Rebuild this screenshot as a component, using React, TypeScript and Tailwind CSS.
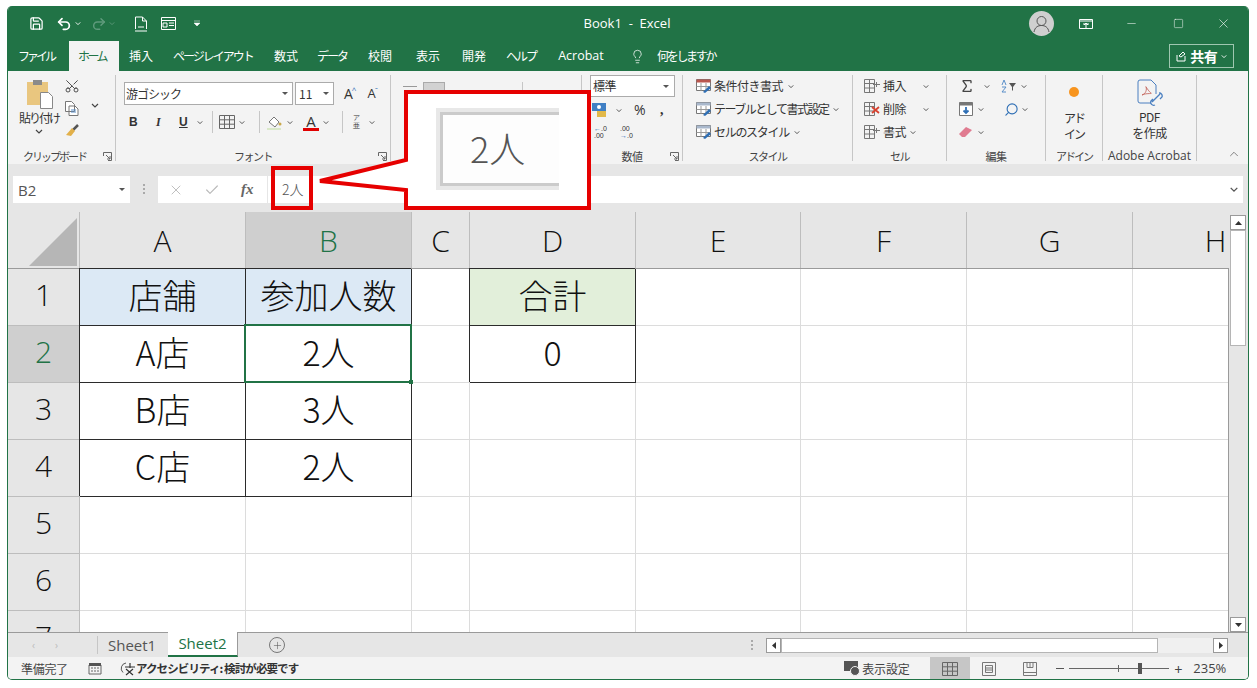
import React from "react";
import { Scissors, Undo2, Redo2, Save, Lightbulb, X, Check, Minus, Square, Search, Plus, Sigma, ChevronUp } from "lucide-react";

const Chev = ({ c = "#444", cls = "" }: { c?: string; cls?: string }) => (
  <svg width="8" height="5" viewBox="0 0 8 5" className={cls}><path d="M1 1l3 3 3-3" fill="none" stroke={c} strokeWidth="1.2" /></svg>
);
const Launcher = () => (
  <svg width="9" height="9" viewBox="0 0 9 9"><path d="M.5 4V.5H8.5V8.5H5M3 3l4 4M7 4v3H4" fill="none" stroke="#666" strokeWidth="1" /></svg>
);
const Sep = ({ cls = "" }: { cls?: string }) => <div className={"w-px bg-[#c6c6c6] " + cls} />;

const GridIcon = ({ c = "#666" }: { c?: string }) => (
  <svg width="16" height="14" viewBox="0 0 16 14"><path d="M.5.5h15v13H.5zM.5 4.8h15M.5 9.2h15M5.5.5v13M10.5.5v13" fill="none" stroke={c} /></svg>
);
const TableIcon = ({ red = false }: { red?: boolean }) => (
  <svg width="18" height="16" viewBox="0 0 18 16">
    <path d="M1.5 1.5h10v13h-10zM1.5 5.5h10M1.5 10h10M6.5 1.5v13" fill="none" stroke="#777" />
    {red ? <path d="M9 6l7 6M16 6l-7 6" stroke="#d8412f" strokeWidth="1.8" /> : <path d="M10 6.5h7M13.5 4v5" stroke="#777" />}
  </svg>
);
const StyleIcon = ({ kind }: { kind: number }) => (
  <svg width="18" height="16" viewBox="0 0 18 16">
    <path d="M1.5 1.5h14v11h-14z" fill="#fff" stroke="#777" />
    <path d="M1.5 1.5h14v3h-14z" fill={kind === 0 ? "#b9574f" : "#a9b8cc"} />
    <path d="M1.5 8.5h14M6 5v8M11 5v8" stroke="#999" />
    <path d="M8 14l6-6 2 2-6 5z" fill="#2f6fb5" />
  </svg>
);

const tabs: [string, string, string][] = [
  ["挿入", "w-[44px]", ""],
  ["ページレイアウト", "w-[100px]", "tracking-[-2px]"],
  ["数式", "w-[46px]", ""],
  ["データ", "w-[46px]", "tracking-[-2px]"],
  ["校閲", "w-[50px]", ""],
  ["表示", "w-[46px]", ""],
  ["開発", "w-[46px]", ""],
  ["ヘルプ", "w-[48px]", "tracking-[-2px]"],
  ["Acrobat", "w-[72px]", "font-['Open_Sans'] text-[12.5px]"],
];

const columns: [string, string, boolean][] = [
  ["A", "w-[166px]", false],
  ["B", "w-[166px]", true],
  ["C", "w-[58px]", false],
  ["D", "w-[166px]", false],
  ["E", "w-[165px]", false],
  ["F", "w-[166px]", false],
  ["G", "w-[166px]", false],
  ["H", "w-[166px]", false],
];

const edge = "border-[#2b2b2b] shadow-[-1px_-1px_0_#2b2b2b]";
const rowsData: { n: string; cells: Record<string, { t: string; cls: string }> }[] = [
  {
    n: "1",
    cells: {
      A: { t: "店舗", cls: "bg-[#dce9f5] " + edge },
      B: { t: "参加人数", cls: "bg-[#dce9f5] " + edge },
      D: { t: "合計", cls: "bg-[#e2efda] " + edge },
    },
  },
  {
    n: "2",
    cells: {
      A: { t: "A店", cls: edge },
      B: { t: "2人", cls: edge },
      D: { t: "0", cls: edge },
    },
  },
  { n: "3", cells: { A: { t: "B店", cls: edge }, B: { t: "3人", cls: edge } } },
  { n: "4", cells: { A: { t: "C店", cls: edge }, B: { t: "2人", cls: edge } } },
  { n: "5", cells: {} },
  { n: "6", cells: {} },
  { n: "7", cells: {} },
];

const font = "font-['Noto_Sans_CJK_JP','Noto_Sans',sans-serif]";

function Title() {
  return (
    <div className="flex h-[35px] shrink-0 items-center bg-[#217346] text-white">
      <div className="ml-[20px] flex w-[185px] items-center">
        <Save size={15} strokeWidth={2} className="ml-[1px] mr-[12px]" />
        <Undo2 size={16} strokeWidth={2.6} />
        <Chev c="#fff" cls="ml-[2px] mr-[9px] scale-75" />
        <Redo2 size={16} strokeWidth={2.2} className="text-[#5f9a7c]" />
        <Chev c="#5f9a7c" cls="ml-[1px] mr-[18px] scale-75" />
        <svg width="14" height="16" viewBox="0 0 14 16" className="mr-[13px]"><path d="M1.5 13V1h7l4 4v8M8.5 1v4h4M1 15h12M4 11h6" fill="none" stroke="#fff" /></svg>
        <svg width="15" height="13" viewBox="0 0 15 13" className="mr-[18px]"><path d="M.5.5h14v12H.5zM.5 3.5h14M2 6h4v4H2zM8 6h5M8 8.5h5" fill="none" stroke="#fff" /></svg>
        <svg width="6" height="7" viewBox="0 0 6 7"><path d="M0 1h6M0 3h6l-3 3z" fill="#fff" stroke="#fff" strokeWidth=".5" /></svg>
      </div>
      <div className="ml-[349px] w-[130px] text-center font-['Open_Sans',sans-serif] text-[13px]">{"Book1\u00a0 -\u00a0 Excel"}</div>
      <div className="ml-[337px] flex h-[25px] w-[25px] items-center justify-center rounded-full bg-[#cfcfcf]">
        <svg width="17" height="18" viewBox="0 0 17 18"><circle cx="8.5" cy="6" r="4.5" fill="none" stroke="#555" /><path d="M1 17c1-5 4-6.500 7.500-6.500S15 12 16 17" fill="none" stroke="#555" /></svg>
      </div>
      <svg width="14" height="10" viewBox="0 0 14 10" className="ml-[25px]"><path d="M.5.5h13v9H.5zM.5 2h13M4 5h6M7 9V4M5 6l2-2 2 2" fill="none" stroke="#fff" /></svg>
      <Minus size={13} strokeWidth={1} className="ml-[32px]" />
      <Square size={11} strokeWidth={1.1} className="ml-[35px]" />
      <X size={15} strokeWidth={1} className="ml-[32px]" />
    </div>
  );
}

function Tabs() {
  return (
    <div className={"flex h-[30px] shrink-0 items-center bg-[#217346] text-[12px] text-white " + font}>
      <span className="ml-[10px] mr-[15px] w-[36px] whitespace-nowrap text-center tracking-[-3px]">ファイル</span>
      <div className="flex h-[30px] w-[50px] items-center justify-center bg-[#f3f3f3] pr-[4px] tracking-[-2.5px] text-[#217346]">ホーム</div>
      <div className="flex items-center">
        {tabs.map(([t, w, c]) => (
          <span key={t} className={"text-center " + w + " " + c}>{t}</span>
        ))}
      </div>
      <Lightbulb size={15} strokeWidth={1.2} className="ml-[13px] mr-[12px]" />
      <span className="tracking-[-2.3px]">何をしますか</span>
      <div className="ml-[454px] flex h-[24px] w-[65px] items-center justify-center border border-[#9fc7b0] font-bold">
        <svg width="12" height="12" viewBox="0 0 12 12" className="mr-[3px]"><path d="M2 5v6h8V6M4 6l4-4 2 2-4 3z" fill="none" stroke="#fff" /></svg>
        <span className="text-[14px] tracking-[-.5px]">共有</span>
        <Chev c="#fff" cls="ml-[3px] scale-75" />
      </div>
    </div>
  );
}

function Group({ w, label, launcher, sep = true, labelCls = "", children }: { w: string; label?: string; launcher?: boolean; sep?: boolean; labelCls?: string; children: React.ReactNode }) {
  return (
    <div className={"flex h-[86px] shrink-0 flex-col border-r " + w + (sep ? " border-[#c6c6c6]" : " border-transparent")}>
      <div className="h-[74px] shrink-0">{children}</div>
      <div className={"relative flex h-[14px] shrink-0 items-center justify-center text-[11px] leading-none tracking-[-.5px] text-[#444] " + labelCls}>
        {label}
        {launcher && <div className="absolute right-[3px] top-[3px] flex"><Launcher /></div>}
      </div>
    </div>
  );
}

function Ribbon() {
  return (
    <div className={"flex h-[93px] shrink-0 bg-[#f3f3f3] pl-[1px] pt-[4px] text-[12px] leading-none text-[#333] " + font}>
      <Group w="w-[107px]" label="クリップボード" launcher labelCls="justify-start pl-[14px] tracking-[-2px]">
        <div className="flex">
          <div className="flex w-[58px] flex-col items-center pl-[2px]">
            <svg width="27" height="30" viewBox="0 0 27 30" className="mt-[4px]">
              <rect x="1" y="3" width="21" height="23" fill="#e9c67f" />
              <rect x="7" y="1" width="9" height="5" fill="#8a8a8a" />
              <path d="M14.500 13.500h8l4 4v12h-12z" fill="#fff" stroke="#888" />
            </svg>
            <span className="mt-[3px] tracking-[-2px]">貼り付け</span>
            <Chev cls="mt-[5px]" />
          </div>
          <div className="-ml-[6px] flex w-[22px] flex-col items-center">
            <Scissors size={16} strokeWidth={1.4} className="mt-[3px] -rotate-90 text-[#444]" />
            <svg width="14" height="15" viewBox="0 0 14 15" className="mt-[7px]"><path d="M.5.5h6l3 3v7h-9zM4 5h6l3 3v6.500H4z" fill="#fff" stroke="#777" /><path d="M6 9h5M6 11h5" stroke="#5a8fc9" /></svg>
            <svg width="14" height="14" viewBox="0 0 14 14" className="mt-[8px]"><path d="M13 1L8 6" stroke="#555" strokeWidth="2.500" /><path d="M7 4l3 3-4 5-5-1z" fill="#e2b04a" /></svg>
          </div>
          <Chev cls="ml-[8px] mt-[28px]" />
        </div>
      </Group>

      <Group w="w-[275px]" label="フォント" launcher labelCls="tracking-[-1.5px]">
        <div className="flex pl-[8px] pt-[7px]">
          <div className="flex h-[23px] w-[169px] items-center justify-between border border-[#ababab] bg-white pl-[1px] pr-[4px] tracking-[-1px]">
            <span>游ゴシック</span>
            <svg width="6" height="3" viewBox="0 0 6 3"><path d="M0 0h6L3 3z" fill="#555" /></svg>
          </div>
          <div className="ml-[2px] flex h-[23px] w-[39px] items-center justify-between border border-[#ababab] bg-white pl-[3px] pr-[4px]">
            <span>11</span>
            <svg width="6" height="3" viewBox="0 0 6 3"><path d="M0 0h6L3 3z" fill="#555" /></svg>
          </div>
          <span className="ml-[10px] flex items-center font-['Open_Sans'] text-[14px]">A<sup className="-ml-[1px] text-[8px] text-[#2f6fb5]">^</sup></span>
          <span className="ml-[11px] flex items-center font-['Open_Sans'] text-[13px]">A<sup className="-ml-[1px] text-[8px] text-[#2f6fb5]">ˇ</sup></span>
        </div>
        <div className="flex h-[26px] items-center pl-[13px] pt-[8px] font-['Liberation_Sans']">
          <b className="w-[27px]">B</b>
          <i className="w-[23px] font-['Liberation_Serif'] font-bold">I</i>
          <b className="w-[17px] underline">U</b>
          <Chev cls="scale-75" />
          <Sep cls="ml-[8px] mr-[6px] h-[22px]" />
          <GridIcon />
          <Chev cls="ml-[3px] scale-75" />
          <Sep cls="ml-[13px] mr-[6px] h-[22px]" />
          <svg width="17" height="17" viewBox="0 0 17 17"><path d="M3 8l5-5 5 5-4 5z" fill="#fff" stroke="#777" /><path d="M1 15h14" stroke="#d9e8c8" strokeWidth="2" /><circle cx="14" cy="10" r="1.500" fill="#c9a84a" /></svg>
          <Chev cls="ml-[3px] scale-75" />
          <span className="ml-[9px] flex w-[16px] flex-col items-center font-['Open_Sans'] text-[15px] leading-[14px]">A<span className="h-[3px] w-[16px] bg-[#e00000]" /></span>
          <Chev cls="ml-[3px] scale-75" />
          <Sep cls="ml-[12px] mr-[8px] h-[22px]" />
          <span className="flex w-[10px] flex-col items-center text-[7px] leading-[8px]"><span>ア</span><span>亜</span></span>
          <Chev cls="ml-[7px] scale-75" />
        </div>
      </Group>

      <Group w="w-[191px]">
        <div className="flex items-start pl-[12px] pt-[7px]">
          <span className="mt-[4px] h-px w-[14px] bg-[#999]" />
          <span className="ml-[6px] h-[12px] w-[22px] border border-[#aaa] bg-[#d2d2d2]" />
          <span className="ml-[34px] mt-[8px] h-[2px] w-[6px] bg-[#aaa]" />
          <span className="ml-[37px] h-[20px] w-px bg-[#c6c6c6]" />
          <span className="ml-[14px] mt-[8px] h-[3px] w-[3px] bg-[#aaa]" />
        </div>
      </Group>

      <Group w="w-[101px]" label="数値" launcher>
        <div className="pl-[8px]">
          <div className="flex h-[22px] w-[85px] items-center justify-between border border-[#ababab] bg-white pl-[2px] pr-[5px] tracking-[-.5px]">
            <span>標準</span>
            <svg width="6" height="3" viewBox="0 0 6 3"><path d="M0 0h6L3 3z" fill="#555" /></svg>
          </div>
          <div className="mt-[3px] flex h-[20px] items-center">
            <svg width="17" height="16" viewBox="0 0 17 16" className="ml-[2px]"><rect y="1" width="14" height="8" fill="#3f7fc4" /><circle cx="7" cy="5" r="2" fill="#fff" /><rect x="5" y="9" width="9" height="6" fill="#e2b94a" /></svg>
            <Chev cls="ml-[6px] scale-75" />
            <span className="ml-[11px] w-[26px] font-['Open_Sans'] text-[14px]">%</span>
            <b className="font-['Liberation_Serif'] text-[14px]">,</b>
          </div>
          <div className="mt-[4px] flex h-[16px] items-center text-[7px] leading-[7px]">
            <span className="ml-[4px] w-[26px] font-['Liberation_Sans']"><span className="text-[#2f6fb5]">←</span>.0<br />.00</span>
            <span className="font-['Liberation_Sans']">.00<br /><span className="text-[#2f6fb5]">→</span>.0</span>
          </div>
        </div>
      </Group>

      <Group w="w-[170px]" label="スタイル" labelCls="tracking-[-1.5px]">
        <div className="flex flex-col gap-[7px] pl-[12px] pt-[3px] tracking-[-.5px]">
          <div className="flex h-[16px] items-center gap-[1px]"><StyleIcon kind={0} />条件付き書式<Chev cls="ml-[3px] scale-75" /></div>
          <div className="flex h-[16px] items-center gap-[1px]"><StyleIcon kind={1} /><span className="tracking-[-1.500px]">テーブルとして書式設定</span><Chev cls="ml-[3px] scale-75" /></div>
          <div className="flex h-[16px] items-center gap-[1px]"><StyleIcon kind={1} /><span className="tracking-[-1.300px]">セルのスタイル</span><Chev cls="ml-[3px] scale-75" /></div>
        </div>
      </Group>

      <Group w="w-[94px]" label="セル" labelCls="tracking-[-1.5px]">
        <div className="flex flex-col gap-[7px] pl-[10px] pt-[3px] tracking-[-.5px]">
          <div className="flex h-[16px] items-center gap-[2px]"><TableIcon /><span className="w-[37px]">挿入</span><Chev cls="scale-75" /></div>
          <div className="flex h-[16px] items-center gap-[2px]"><TableIcon red /><span className="w-[37px]">削除</span><Chev cls="scale-75" /></div>
          <div className="flex h-[16px] items-center gap-[2px]"><TableIcon /><span>書式</span><Chev cls="ml-[1px] scale-75" /></div>
        </div>
      </Group>

      <Group w="w-[99px]" label="編集">
        <div className="flex flex-col gap-[7px] pl-[12px] pt-[3px]">
          <div className="flex h-[16px] items-center">
            <Sigma size={16} strokeWidth={2} className="text-[#444]" />
            <Chev cls="ml-[8px] scale-75" />
            <svg width="17" height="14" viewBox="0 0 17 14" className="ml-[10px]"><path d="M1 6l2-5 2 5M1 8h4L1 13h4" fill="none" stroke="#5a8fc9" /><path d="M8 4h7l-3 4v4l-1-1V8z" fill="#555" /></svg>
            <Chev cls="ml-[2px] scale-75" />
          </div>
          <div className="flex h-[16px] items-center">
            <svg width="14" height="14" viewBox="0 0 14 14"><path d="M.5.5h13v13H.5z" fill="#fff" stroke="#777" /><path d="M.5.5h13v3H.5z" fill="#777" /><path d="M7 5v6M4.500 8.500L7 11l2.500-2.500" fill="none" stroke="#2f6fb5" strokeWidth="1.800" /></svg>
            <Chev cls="ml-[4px] scale-75" />
            <Search size={15} strokeWidth={1.8} className="ml-[19px] -scale-x-100 text-[#2f6fb5]" />
            <Chev cls="ml-[2px] scale-75" />
          </div>
          <div className="flex h-[16px] items-center">
            <svg width="14" height="12" viewBox="0 0 14 12"><path d="M0 8l7-7 6 3-7 7H3z" fill="#e07b90" /></svg>
            <Chev cls="ml-[4px] scale-75" />
          </div>
        </div>
      </Group>

      <Group w="w-[57px]" label="アドイン" labelCls="tracking-[-2px]">
        <div className="flex flex-col items-center">
          <div className="mt-[12px] h-[10px] w-[10px] rounded-full bg-[#f7941e]" />
          <div className="mt-[13px] text-center leading-[16px] tracking-[-2px]">アド<br />イン</div>
        </div>
      </Group>

      <Group w="w-[94px]" label="Adobe Acrobat" labelCls="font-['Open_Sans'] text-[12px] tracking-[0px]">
        <div className="flex flex-col items-center">
          <svg width="26" height="28" viewBox="0 0 26 28" className="mt-[4px]">
            <path d="M14 24H3a2 2 0 0 1-2-2V3a2 2 0 0 1 2-2h11l5 5v9" fill="none" stroke="#4a7fc0" />
            <path d="M5 16c4-1 5-6 4-8s3 5 5 6-6 0-9 2z" fill="none" stroke="#c05a50" strokeWidth=".8" />
            <path d="M15 23l8-8M18 26a3 3 0 0 1-4-4l2-2M22 14a3 3 0 0 1 3 4l-2 2" fill="none" stroke="#4a7fc0" strokeWidth="1.300" />
          </svg>
          <div className="mt-[2px] text-center leading-[16px] tracking-[-.5px]">PDF<br />を作成</div>
        </div>
      </Group>

      <div className="flex h-[86px] flex-1 items-end justify-end pb-[0px] pr-[7px]">
        <ChevronUp size={14} strokeWidth={1.2} className="text-[#555]" />
      </div>
    </div>
  );
}

function FormulaBar() {
  return (
    <div className="flex h-[48px] shrink-0 items-start bg-[#e6e6e6] pl-[5px] pt-[12px]">
      <div className="flex h-[27px] w-[117px] items-center justify-between bg-white pl-[5px] pr-[5px] font-['Open_Sans'] text-[15px] text-[#555]">
        <span className="mt-[1px]">B2</span>
        <svg width="6" height="3" viewBox="0 0 6 3"><path d="M0 0h6L3 3z" fill="#555" /></svg>
      </div>
      <div className="ml-[13px] mr-[13px] mt-[8px] flex flex-col gap-[2px]">
        <div className="h-[2px] w-[2px] bg-[#aaa]" /><div className="h-[2px] w-[2px] bg-[#aaa]" /><div className="h-[2px] w-[2px] bg-[#aaa]" />
      </div>
      <div className="flex h-[27px] w-[109px] items-center bg-white">
        <X size={16} strokeWidth={1.4} className="ml-[10px] text-[#bbb]" />
        <Check size={16} strokeWidth={1.8} className="ml-[20px] text-[#bbb]" />
        <i className="ml-[21px] font-['Liberation_Serif'] text-[15px] font-bold text-[#666]">fx</i>
      </div>
      <div className="ml-px flex h-[27px] flex-1 items-center justify-between bg-white pl-[14px] pr-[5px] font-['Noto_Sans_CJK_JP'] text-[14px] font-light text-[#555]">
        <span>2人</span>
        <Chev c="#555" cls="scale-110" />
      </div>
      <div className="w-[5px]" />
    </div>
  );
}

function Sheet() {
  return (
    <div className="flex h-[420px] shrink-0 overflow-hidden bg-white">
      <div className="w-[1220px] shrink-0 overflow-hidden">
        <div className="flex h-[57px] w-[1500px] border-b border-[#9a9a9a] bg-[#e6e6e6]">
          <div className="flex w-[72px] shrink-0 items-end justify-end border-r border-[#bdbdbd] pb-[2px] pr-[2px]">
            <svg width="48" height="48" viewBox="0 0 48 48"><path d="M48 0v48H0z" fill="#b6b6b6" /></svg>
          </div>
          {columns.map(([c, w, sel]) => (
            <div key={c} className={"flex shrink-0 items-center justify-center border-r border-[#bdbdbd] font-['Open_Sans'] text-[30px] font-light " + w + (sel ? " bg-[#cfcfcf] text-[#217346]" : " text-[#111]")}>{c}</div>
          ))}
        </div>
        {rowsData.map((r) => (
          <div key={r.n} className="flex h-[57px] w-[1500px]">
            <div className={"flex w-[72px] shrink-0 items-center justify-center border-r border-b border-[#bdbdbd] pb-[5px] font-['Open_Sans'] text-[30px] font-light " + (r.n === "2" ? "bg-[#cfcfcf] text-[#217346]" : "bg-[#e6e6e6] text-[#111]")}>{r.n}</div>
            {columns.map(([c, w]) => {
              const cell = r.cells[c];
              return (
                <div key={c} className={"flex shrink-0 items-center justify-center border-r border-b pb-[5px] font-['Noto_Sans_CJK_JP'] text-[34px] font-light text-[#111] " + w + " " + (cell ? cell.cls : "border-[#dcdcdc]")}>
                  {cell ? cell.t : ""}
                </div>
              );
            })}
          </div>
        ))}
      </div>
      <div className="flex w-[21px] shrink-0 bg-[#e6e6e6]">
        <div className="mt-[56px] w-px bg-[#9a9a9a]" />
        <div className="ml-px flex w-[16px] flex-col pt-[3px]">
          <div className="flex h-[15px] w-[16px] items-center justify-center border border-[#9a9a9a] bg-white">
            <svg width="7" height="4" viewBox="0 0 7 4"><path d="M0 4h7L3.500 0z" fill="#333" /></svg>
          </div>
          <div className="h-[116px] w-[16px] border border-[#b5b5b5] bg-white" />
          <div className="flex-1" />
          <div className="flex h-[15px] w-[16px] items-center justify-center border border-[#9a9a9a] bg-white">
            <svg width="7" height="4" viewBox="0 0 7 4"><path d="M0 0h7L3.500 4z" fill="#333" /></svg>
          </div>
        </div>
      </div>
    </div>
  );
}

function SheetTabs() {
  return (
    <div className="flex h-[25px] shrink-0 items-center border-t border-[#9a9a9a] bg-[#e6e6e6] font-['Open_Sans'] text-[15px] text-[#555]">
      <span className="ml-[24px] w-[23px] text-[10px] text-[#bbb]">‹</span>
      <span className="w-[42px] text-[10px] text-[#bbb]">›</span>
      <Sep cls="h-[18px] bg-[#9a9a9a]" />
      <span className="w-[70px] pl-[10px]">Sheet1</span>
      <div className="mt-[-1px] flex h-[25px] w-[70px] items-center justify-center border-b-2 border-r border-[#217346] border-r-[#9a9a9a] bg-white text-[#217346]">Sheet2</div>
      <div className="ml-[31px] flex h-[16px] w-[16px] items-center justify-center rounded-full border border-[#777]">
        <Plus size={11} strokeWidth={1.2} />
      </div>
      <div className="ml-[466px] flex flex-col gap-[2px]">
        <div className="h-[2px] w-[2px] bg-[#aaa]" /><div className="h-[2px] w-[2px] bg-[#aaa]" /><div className="h-[2px] w-[2px] bg-[#aaa]" />
      </div>
      <div className="ml-[13px] flex h-[15px] w-[462px] items-stretch bg-[#f0f0f0]">
        <div className="flex w-[15px] items-center justify-center border border-[#9a9a9a] bg-white">
          <svg width="4" height="7" viewBox="0 0 4 7"><path d="M4 0v7L0 3.500z" fill="#333" /></svg>
        </div>
        <div className="w-[377px] border border-[#b5b5b5] bg-white" />
        <div className="flex-1" />
        <div className="flex w-[15px] items-center justify-center border border-[#9a9a9a] bg-white">
          <svg width="4" height="7" viewBox="0 0 4 7"><path d="M0 0v7l4-3.500z" fill="#333" /></svg>
        </div>
      </div>
    </div>
  );
}

function StatusBar() {
  return (
    <div className={"flex h-[23px] shrink-0 items-center bg-[#f3f3f3] text-[12px] text-[#444] " + font}>
      <span className="ml-[13px] w-[67px] tracking-[-.3px]">準備完了</span>
      <svg width="14" height="13" viewBox="0 0 14 13"><path d="M1 3h12v9H1z" fill="none" stroke="#666" /><path d="M1 1h12v3H1z" fill="#555" /><path d="M3 6h2M6 6h2M9 6h2M3 9h2M6 9h2M9 9h2" stroke="#666" /></svg>
      <svg width="17" height="15" viewBox="0 0 17 15" className="ml-[17px]"><path d="M7 2a5.500 5.500 0 0 0-3 9.500" fill="none" stroke="#555" /><path d="M7 8l7 6M14 8l-7 6M6 6h10M11 2v5" stroke="#333" strokeWidth="1.200" /></svg>
      <span className="text-[11.500px] font-bold tracking-[-.9px] text-[#333]">アクセシビリティ: 検討が必要です</span>
      <div className="ml-[546px] flex items-center">
        <svg width="18" height="15" viewBox="0 0 18 15"><path d="M0 0h14v10H0z" fill="#555" /><circle cx="11" cy="10" r="4.500" fill="#555" stroke="#f3f3f3" /></svg>
        <span className="tracking-[-.2px]">表示設定</span>
      </div>
      <div className="ml-[21px] flex h-[23px] w-[40px] items-center justify-center bg-[#c6c6c6]"><GridIcon /></div>
      <svg width="14" height="14" viewBox="0 0 14 14" className="ml-[12px]"><path d="M.5.5h13v13H.5zM3.500 3.500h7v7h-7zM3.500 6h7M3.500 8h7" fill="none" stroke="#777" /></svg>
      <svg width="14" height="14" viewBox="0 0 14 14" className="ml-[27px]"><path d="M.5.5h13v13H.5zM.5 10.500h13M4 .5v5h6v-5M7 .5v5" fill="none" stroke="#777" /></svg>
      <span className="ml-[19px] h-px w-[8px] bg-[#555]" />
      <div className="relative ml-[5px] h-px w-[100px] bg-[#666]">
        <span className="absolute left-[49px] top-[-3px] h-[7px] w-px bg-[#666]" />
        <span className="absolute left-[69px] top-[-5px] h-[11px] w-[4px] bg-[#555]" />
      </div>
      <span className="ml-[5px] text-[14px] leading-none">+</span>
      <span className="ml-[11px] font-['Open_Sans'] text-[13px]">235%</span>
    </div>
  );
}

export default function App() {
  return (
    <div className="relative h-[688px] w-[1257px] overflow-hidden bg-white">
      <div className="pl-[7px] pt-[6px]">
        <div className="flex h-[674px] w-[1242px] flex-col overflow-hidden rounded-[5px] border-x border-b border-[#217346] bg-[#e6e6e6]">
          <Title />
          <Tabs />
          <Ribbon />
          <FormulaBar />
          <Sheet />
          <SheetTabs />
          <StatusBar />
        </div>
      </div>

      <div className="absolute left-[244px] top-[324px] h-[59px] w-[168px] border-2 border-[#217346]" />
      <div className="absolute left-[409px] top-[380px] h-[4px] w-[4px] bg-[#217346]" />

      <div className="absolute left-[271px] top-[166px] h-[44px] w-[42px] border-[4px] border-[#e60000]" />
      <svg width="300" height="140" viewBox="0 0 300 140" className="absolute left-[300px] top-[80px]">
        <path d="M106 12H289V128H106V110L20 101 106 80Z" fill="#fff" stroke="#e60000" strokeWidth="4" />
      </svg>
      <div className="absolute left-[436px] top-[108px] h-[82px] w-[123px] bg-[#e8e8e8] pl-[4px] pt-[4px]">
        <div className="flex h-[74px] items-center border-y-[3px] border-l-[3px] border-[#cbcbcb] bg-[#fdfdfd] pb-[4px] pl-[27px] font-['Noto_Sans_CJK_JP'] text-[36px] font-light text-[#555]">2人</div>
      </div>
    </div>
  );
}
